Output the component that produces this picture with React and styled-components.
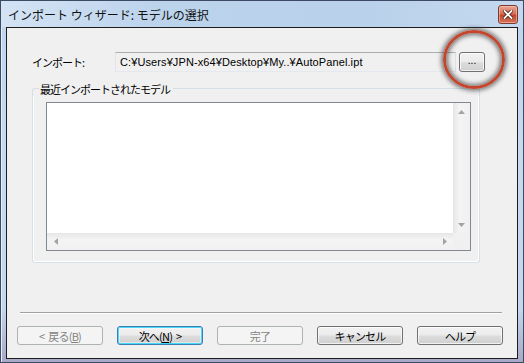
import React from 'react'
import styled, { createGlobalStyle, css } from 'styled-components';

// Styles
const Global = createGlobalStyle`
    body{
        margin:0;
        background:#fff;
    }
    *{
        box-sizing:border-box;
    }
`;

const Window = styled.div`
    position:relative;
    width:524px;
    height:363px;
    display:flex;
    flex-direction:column;
    border:1px solid #3a4b63;
    background:linear-gradient(to bottom, #bed5ee 0%, #c6daf0 40%, #c3d8ee 85%, #a8a8c6 100%);
    box-shadow:inset 1px 1px 0 #e8f1fb;
    font-family:"Noto Sans CJK JP", sans-serif;
    overflow:hidden;
`;

const TitleBar = styled.div`
    height:26px;
    display:flex;
    align-items:center;
    justify-content:space-between;
    padding:0 5px 0 7px;
    background:linear-gradient(to right, #d3e3f4 0%, #bcd3ec 30%, #b9d1ea 70%, #c4d9ef 100%);
`;

const Title = styled.span`
    font-size:12px;
    color:#111;
    padding-top:1px;
`;

const CloseButton = styled.div`
    width:20px;
    height:19px;
    align-self:flex-start;
    margin-top:4px;
    border:1px solid #7e3a2c;
    border-radius:3px;
    background:linear-gradient(to bottom, #e7a693 0%, #d87059 45%, #c4452c 55%, #d2765e 100%);
    box-shadow:inset 0 0 0 1px rgba(255,210,195,0.5);
    display:grid;
    place-items:center;
`;

const Client = styled.div`
    flex:1;
    margin:0 5px 3px;
    border:1px solid #1c1c1c;
    background:#f0f0f0;
    display:flex;
    flex-direction:column;
    padding:24px 0 13px;
`;

const ImportRow = styled.div`
    display:flex;
    align-items:center;
    margin-left:25px;
    height:20px;
`;

const Label = styled.span`
    width:83px;
    font-size:11px;
    letter-spacing:-1px;
    color:#000;
`;

const PathBox = styled.div`
    width:341px;
    height:20px;
    border:1px solid;
    border-color:#abadb3 #dbdfe6 #e3e9ef #e2e3ea;
    background:#f0f0f0;
    display:flex;
    align-items:center;
    padding-left:4px;
    font-family:"Liberation Sans", Arial, sans-serif;
    font-size:11px;
    letter-spacing:0.1px;
    color:#000;
    white-space:nowrap;
`;

const GroupHead = styled.div`
    display:flex;
    height:14px;
    margin:10px 0 0 25px;
    width:448px;

    &::before, &::after{
        content:'';
        align-self:flex-end;
        height:7px;
        border-top:1px solid #d5dfe5;
    }
    &::before{
        width:6px;
        border-left:1px solid #d5dfe5;
        border-top-left-radius:3px;
    }
    &::after{
        flex:1;
        border-right:1px solid #d5dfe5;
        border-top-right-radius:3px;
    }
`;

const GroupTitle = styled.span`
    font-size:11px;
    letter-spacing:-1px;
    line-height:14px;
    padding:0 3px 0 1px;
    color:#000;
`;

const GroupBody = styled.div`
    width:448px;
    margin-left:25px;
    border:1px solid #d5dfe5;
    border-top:none;
    border-radius:0 0 3px 3px;
    box-shadow:inset 1px 0 0 #fff, inset -1px -1px 0 #fff;
    padding:6px 8px 11px 13px;
`;

const ListBox = styled.div`
    width:425px;
    height:149px;
    border:1px solid #828790;
    display:grid;
    grid-template-columns:1fr 17px;
    grid-template-rows:1fr 17px;
    background:#fff;
`;

const ListArea = styled.div`
    background:#fff;
`;

const VScroll = styled.div`
    display:flex;
    flex-direction:column;
    justify-content:space-between;
    background:linear-gradient(to right, #e6e6e6, #f4f4f4 40%, #f0f0f0);
`;

const HScroll = styled.div`
    display:flex;
    justify-content:space-between;
    background:linear-gradient(to bottom, #e6e6e6, #f4f4f4 40%, #f0f0f0);
`;

const Corner = styled.div`
    background:#f0f0f0;
`;

const ArrowCell = styled.div`
    width:17px;
    height:17px;
    display:grid;
    place-items:center;
`;

const Footer = styled.div`
    margin-top:auto;
`;

const Separator = styled.div`
    height:2px;
    margin:0 15px 12px 13px;
    border-top:1px solid #a0a0a0;
    border-bottom:1px solid #fff;
`;

const ButtonRow = styled.div`
    display:flex;
    gap:14px;
    padding-left:10px;
`;

const Button = styled.div`
    width:${p => p.$width || 86}px;
    height:${p => p.$height || 19}px;
    border:1px solid #707070;
    border-radius:3px;
    background:linear-gradient(to bottom, #f2f2f2 0%, #ebebeb 48%, #dddddd 52%, #cfcfcf 100%);
    box-shadow:inset 0 0 0 1px rgba(255,255,255,0.7);
    display:flex;
    align-items:center;
    justify-content:center;
    gap:4px;
    font-size:11px;
    letter-spacing:-0.8px;
    color:#000;
    white-space:pre;

    ${p => p.$disabled && css`
        border-color:#adb2b5;
        background:#f4f4f4;
        box-shadow:none;
        color:#838383;
    `}

    ${p => p.$focused && css`
        border-color:#3c7fb1;
        box-shadow:inset 0 0 0 1px #48d8fb, inset 0 0 0 2px rgba(255,255,255,0.4);
    `}
`;

const BrowseButton = styled(Button)`
    margin-left:3px;
    letter-spacing:0;
    font-family:"Liberation Sans", Arial, sans-serif;
    font-size:10px;
    padding-bottom:3px;
`;

const Key = styled.span`
    text-decoration:underline;
`;

const Callout = styled.div`
    position:absolute;
    left:442px;
    top:29px;
    width:62px;
    height:59px;
    border:3px solid #c4452c;
    border-radius:50%;
    box-shadow:0 0 4px 2px rgba(60,60,60,0.65), inset 0 0 4px 2px rgba(60,60,60,0.65);
    pointer-events:none;
`;

const Arrow = ({ dir }) => {
    const pts = {
        up: '0,4 7,4 3.5,0',
        down: '0,0 7,0 3.5,4',
        left: '4,0 4,7 0,3.5',
        right: '0,0 0,7 4,3.5',
    }[dir];
    const vertical = dir === 'up' || dir === 'down';
    return (
        <svg width={vertical ? 7 : 4} height={vertical ? 4 : 7} viewBox={vertical ? '0 0 7 4' : '0 0 4 7'}>
            <polygon points={pts} fill='#a3a3a3' />
        </svg>
    );
};

const App = () => {
    return (
        <>
            <Global />
            <Window>
                <TitleBar>
                    <Title>インポート ウィザード: モデルの選択</Title>
                    <CloseButton>
                        <svg width='10' height='9' viewBox='0 0 10 9'>
                            <path d='M1.5 1 L8.5 8 M8.5 1 L1.5 8' stroke='#4a1e14' strokeWidth='3.4' strokeLinecap='square' />
                            <path d='M1.5 1 L8.5 8 M8.5 1 L1.5 8' stroke='#fff' strokeWidth='1.8' strokeLinecap='square' />
                        </svg>
                    </CloseButton>
                </TitleBar>
                <Client>
                    <ImportRow>
                        <Label>インポート:</Label>
                        <PathBox>C:¥Users¥JPN-x64¥Desktop¥My..¥AutoPanel.ipt</PathBox>
                        <BrowseButton $width={26} $height={20}>...</BrowseButton>
                    </ImportRow>
                    <GroupHead>
                        <GroupTitle>最近インポートされたモデル</GroupTitle>
                    </GroupHead>
                    <GroupBody>
                        <ListBox>
                            <ListArea />
                            <VScroll>
                                <ArrowCell><Arrow dir='up' /></ArrowCell>
                                <ArrowCell><Arrow dir='down' /></ArrowCell>
                            </VScroll>
                            <HScroll>
                                <ArrowCell><Arrow dir='left' /></ArrowCell>
                                <ArrowCell><Arrow dir='right' /></ArrowCell>
                            </HScroll>
                            <Corner />
                        </ListBox>
                    </GroupBody>
                    <Footer>
                        <Separator />
                        <ButtonRow>
                            <Button $disabled><span>&lt;</span><span>戻る(<Key>B</Key>)</span></Button>
                            <Button $focused><span>次へ(<Key>N</Key>)</span><span>&gt;</span></Button>
                            <Button $disabled>完了</Button>
                            <Button>キャンセル</Button>
                            <Button>ヘルプ</Button>
                        </ButtonRow>
                    </Footer>
                </Client>
                <Callout />
            </Window>
        </>
    )
}

export default App
